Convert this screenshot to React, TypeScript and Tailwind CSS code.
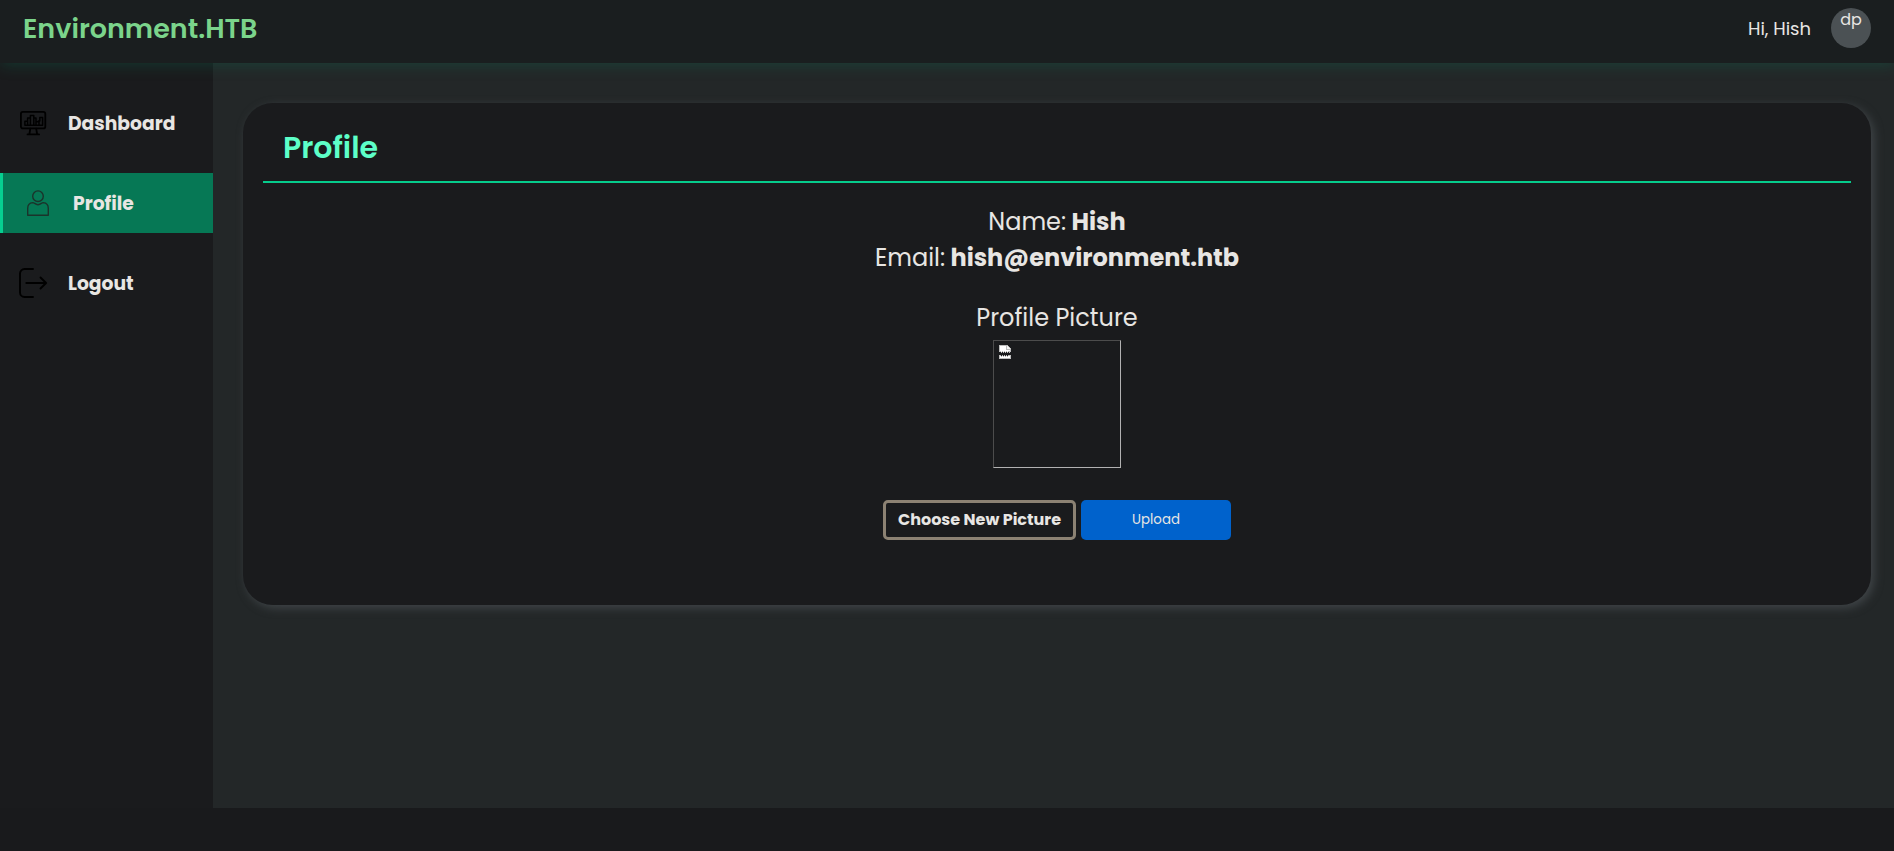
import type { ReactNode } from "react";

function DashboardIcon() {
  return (
    <svg className="h-[30px] w-[30px] shrink-0" viewBox="0 0 30 30" fill="none" stroke="#000" strokeWidth="1.8" strokeLinejoin="round">
      <rect x="2.9" y="3.8" width="24.4" height="16.6" rx="2" />
      <path d="M12.3 20.6 11.4 26M18.2 20.6 19.1 26M9.5 26.4h11.6" strokeLinecap="round" />
      <path
        d="M6.9 17.3v-4h2.7v-3.2h2.8V7.400h3.400v2.700h2.200v3.600h2.400v-.8h1.400V9.600h2.800v7.700zM9.600 13.500v3.600M12.400 10.200v6.900M15.800 10.200v6.900M18 13.500v3.600M21 13v4"
        strokeWidth="1.5"
      />
    </svg>
  );
}

function ProfileIcon() {
  return (
    <svg className="h-[30px] w-[30px] shrink-0" viewBox="0 0 30 30" fill="none" stroke="#1b332b" strokeWidth="1.4">
      <circle cx="15" cy="8.2" r="5.3" />
      <path
        d="M4.700 27.200v-6.800c0-3.200 1.900-5.500 5-5.800 1 0 1.500.300 2 .800 1.900 1.500 4.700 1.500 6.600 0 .500-.500 1-.800 2-.800 3.100.300 5 2.600 5 5.800v6.800z"
        strokeLinejoin="round"
      />
    </svg>
  );
}

function LogoutIcon() {
  return (
    <svg className="h-[30px] w-[30px] shrink-0" viewBox="0 0 30 30" fill="none" stroke="#000" strokeWidth="1.9" strokeLinecap="round" strokeLinejoin="round">
      <path d="M15 1H6.500A4.500 4.500 0 0 0 2 5.500v19a4.500 4.500 0 0 0 4.500 4.500H15" />
      <path d="M8.300 15h19.600M22.500 9.500l5.600 5.500-5.600 5.500" />
    </svg>
  );
}

function BrokenImageIcon() {
  return (
    <svg className="h-[14px] w-[12px]" viewBox="0 0 12 14" shapeRendering="crispEdges">
      <path d="M0 0h9v1h1v1h1v1h1v4h-1v1h-1V7H9v1H8V7H7v1H6V7H5v1H4V7H3v1H2V7H0z" fill="#bdbdbd" />
      <path d="M1 1h6v4h4v1H9v1H8V6H7v1H6V6H5v1H4V6H3v1H2V6H1z" fill="#fff" />
      <path d="M8 1h1v1h1v1h1v1H8z" fill="#f4f4f4" />
      <path d="M0 10h2v1h1v-1h1v1h1v-1h1v1h1v-1h1v1h1v-1h3v4H0z" fill="#bdbdbd" />
      <path d="M1 11h1v1h1v-1h1v1h1v-1h1v1h1v-1h1v1h1v-1h2v2H1z" fill="#fff" />
    </svg>
  );
}

function NavItem({ icon, label, active = false }: { icon: ReactNode; label: string; active?: boolean }) {
  return (
    <a
      className={
        active
          ? "flex h-[60px] items-center gap-5 border-l-[3px] border-[#06cf90] bg-[#067855] pl-5"
          : "flex h-[60px] items-center gap-5 pl-[18px]"
      }
    >
      {icon}
      <h3 className="pt-0.5 text-[18.72px] leading-[28px] font-bold">{label}</h3>
    </a>
  );
}

export default function App() {
  return (
    <div className="flex h-[851px] flex-col overflow-hidden bg-[#191a1c] font-['Poppins',Inter,sans-serif] text-[#e8e6e3]">
      <header className="relative z-10 flex h-[63px] shrink-0 items-center justify-between bg-[#1a1e1f] pr-[23px] pb-[7px] pl-[23px] shadow-[1px_1px_15px_rgba(4,143,104,0.27)]">
        <div className="pt-0.5 text-[27px] font-semibold text-[#7bd48b]">Environment.HTB</div>
        <div className="flex items-center gap-5">
          <span className="text-[18px]">Hi, Hish</span>
          <div className="flex h-10 w-10 justify-center rounded-full bg-[#4b5154] text-base leading-6">dp</div>
        </div>
      </header>

      <div className="flex h-[745px] shrink-0">
        <nav className="flex w-[213px] shrink-0 flex-col gap-5 bg-[#1a1b1d] pt-[30px]">
          <NavItem icon={<DashboardIcon />} label="Dashboard" />
          <NavItem icon={<ProfileIcon />} label="Profile" active />
          <NavItem icon={<LogoutIcon />} label="Logout" />
        </nav>

        <main className="flex-1 bg-[#232728] pt-10 pr-[23px] pl-[30px]">
          <section className="h-[502px] rounded-[30px] bg-[#1a1b1d] px-5 shadow-[3px_3px_10px_#404548]">
            <div className="flex h-20 items-center border-b-2 border-[#06cc8c] px-5 pt-[11px]">
              <h1 className="text-[30px] leading-[45px] font-semibold text-[#5dffc8]">Profile</h1>
            </div>
            <div className="flex flex-col items-center pt-[21px] text-2xl leading-9">
              <p className="[word-spacing:-1px]">
                Name: <b>Hish</b>
              </p>
              <p className="[word-spacing:-1px]">
                Email: <b>hish@environment.htb</b>
              </p>
              <p className="mt-6">Profile Picture</p>
              <div className="mt-1 h-32 w-32 border border-t-[#4c4c4c] border-r-[#b2b2b2] border-b-[#b2b2b2] border-l-[#4c4c4c] pt-1 pl-[5px]">
                <BrokenImageIcon />
              </div>
              <div className="mt-8 flex gap-[5px]">
                <button className="h-10 w-[193px] rounded-[5px] border-[3px] border-[#8c8273] text-base leading-6 font-bold whitespace-nowrap">
                  Choose New Picture
                </button>
                <button className="h-10 w-[150px] rounded-[5px] bg-[#0062cc] text-[13.333px] leading-5">Upload</button>
              </div>
            </div>
          </section>
        </main>
      </div>
    </div>
  );
}
